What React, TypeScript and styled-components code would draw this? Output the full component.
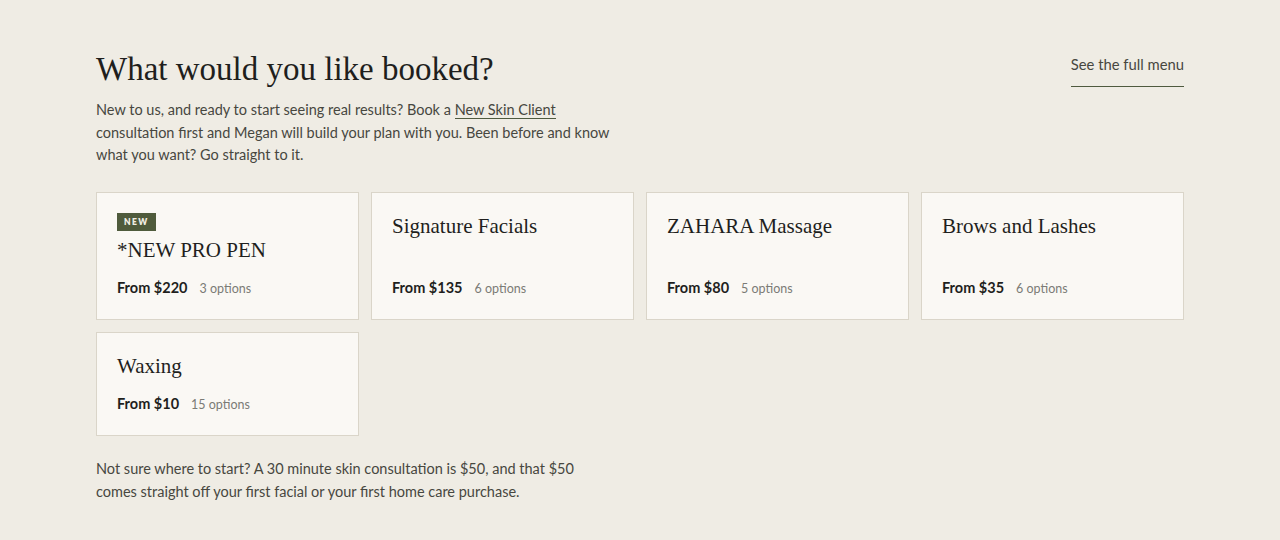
import React from "react";
import styled, { createGlobalStyle } from "styled-components";

const GlobalStyle = createGlobalStyle`
  html, body {
    margin: 0;
    padding: 0;
    background-color: #efece4;
  }
  body {
    font-family: "Lato", "Noto Sans", sans-serif;
    color: #3f3f3c;
  }
  * {
    box-sizing: border-box;
  }
`;

type Service = {
  name: string;
  price: string;
  options: number;
  isNew?: boolean;
};

const services: Service[] = [
  { name: "*NEW PRO PEN", price: "$220", options: 3, isNew: true },
  { name: "Signature Facials", price: "$135", options: 6 },
  { name: "ZAHARA Massage", price: "$80", options: 5 },
  { name: "Brows and Lashes", price: "$35", options: 6 },
  { name: "Waxing", price: "$10", options: 15 },
];

const App = () => {
  return (
    <>
      <GlobalStyle />
      <Section>
        <Header>
          <Intro>
            <Title>What would you like booked?</Title>
            <Lead>
              New to us, and ready to start seeing real results? Book a{" "}
              <InlineLink href="#">New Skin Client</InlineLink> consultation first and Megan will
              build your plan with you. Been before and know what you want? Go straight to it.
            </Lead>
          </Intro>
          <MenuLink href="#">See the full menu</MenuLink>
        </Header>

        <Grid>
          {services.map((s) => (
            <Card key={s.name} href="#">
              {s.isNew && <Badge>NEW</Badge>}
              <CardTitle>{s.name}</CardTitle>
              <PriceRow>
                <Price>From {s.price}</Price>
                <Options>{s.options} options</Options>
              </PriceRow>
            </Card>
          ))}
        </Grid>

        <Note>
          Not sure where to start? A 30 minute skin consultation is $50, and that $50 comes
          straight off your first facial or your first home care purchase.
        </Note>
      </Section>
    </>
  );
};

export default App;

const Section = styled.section`
  width: 1088px;
  margin: 0 auto;
  padding: 48px 0 40px;
`;

const Header = styled.div`
  display: flex;
  justify-content: space-between;
  align-items: flex-start;
  margin-bottom: 25px;
`;

const Intro = styled.div`
  max-width: 520px;
`;

const Title = styled.h2`
  margin: 0 0 9px;
  font-family: "Liberation Serif", serif;
  font-weight: 400;
  font-size: 33px;
  line-height: 42px;
  color: #1f1f1d;
`;

const Lead = styled.p`
  margin: 0;
  font-size: 14.5px;
  line-height: 22.5px;
  color: #47473f;
`;

const InlineLink = styled.a`
  color: inherit;
  text-decoration: none;
  border-bottom: 1px solid #4f5a3f;
`;

const MenuLink = styled.a`
  margin-top: 7px;
  padding-bottom: 13px;
  font-size: 14.8px;
  line-height: 18px;
  color: #47473f;
  text-decoration: none;
  border-bottom: 1px solid #4f5a3f;
`;

const Grid = styled.div`
  display: grid;
  grid-template-columns: repeat(4, 1fr);
  gap: 12px;
`;

const Card = styled.a`
  display: flex;
  flex-direction: column;
  padding: 20px;
  background-color: #faf8f4;
  border: 1px solid #dad5c9;
  color: inherit;
  text-decoration: none;
`;

const Badge = styled.span`
  align-self: flex-start;
  margin-bottom: 6px;
  padding: 0 7px;
  height: 18px;
  line-height: 18px;
  background-color: #4f5b3c;
  color: #f1eee4;
  font-size: 8.5px;
  font-weight: 800;
  letter-spacing: 1.4px;
`;

const CardTitle = styled.h3`
  margin: 0;
  font-family: "Liberation Serif", serif;
  font-weight: 400;
  font-size: 21px;
  line-height: 26px;
  color: #1f1f1d;
`;

const PriceRow = styled.div`
  display: flex;
  align-items: baseline;
  gap: 12px;
  margin-top: auto;
  padding-top: 15px;
  line-height: 20px;
`;

const Price = styled.span`
  font-size: 14.5px;
  font-weight: 700;
  color: #1f1f1d;
`;

const Options = styled.span`
  font-size: 12.5px;
  color: #7b7b76;
`;

const Note = styled.p`
  margin: 21px 0 0;
  max-width: 520px;
  font-size: 14.5px;
  line-height: 23px;
  color: #47473f;
`;
